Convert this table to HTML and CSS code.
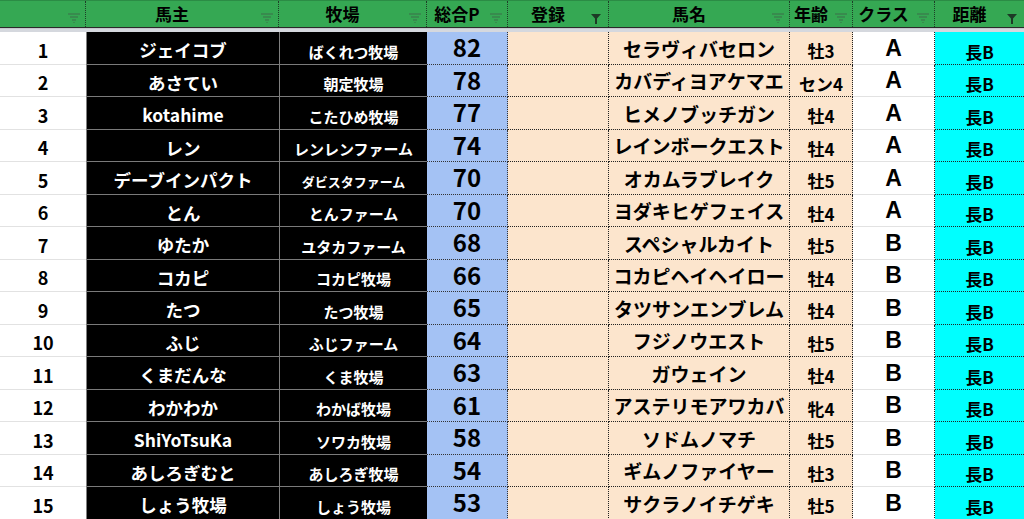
FILE: index.html
```html
<!DOCTYPE html>
<html lang="ja">
<head>
<meta charset="utf-8">
<link rel="stylesheet" href="styles.css">
</head>
<body>
<div class="sheet">
  <div class="head">
    <div class="hc"><span class="ht"></span><svg class="fi" viewBox="0 0 12 10"><path d="M0 1h12M2 4h8M4 7h4M5.5 9.5h1"/></svg></div>
    <div class="hc"><span class="ht">馬主</span><svg class="fi" viewBox="0 0 12 10"><path d="M0 1h12M2 4h8M4 7h4M5.5 9.5h1"/></svg></div>
    <div class="hc"><span class="ht">牧場</span><svg class="fi" viewBox="0 0 12 10"><path d="M0 1h12M2 4h8M4 7h4M5.5 9.5h1"/></svg></div>
    <div class="hc"><span class="ht">総合P</span><svg class="fi" viewBox="0 0 12 10"><path d="M0 1h12M2 4h8M4 7h4M5.5 9.5h1"/></svg></div>
    <div class="hc"><span class="ht">登録</span><svg class="ff" viewBox="0 0 10 10"><path d="M0 0h10L6 4.5V10H4V4.5z"/></svg></div>
    <div class="hc"><span class="ht">馬名</span><svg class="fi" viewBox="0 0 12 10"><path d="M0 1h12M2 4h8M4 7h4M5.5 9.5h1"/></svg></div>
    <div class="hc"><span class="ht">年齢</span><svg class="fi" viewBox="0 0 12 10"><path d="M0 1h12M2 4h8M4 7h4M5.5 9.5h1"/></svg></div>
    <div class="hc"><span class="ht">クラス</span><svg class="fi" viewBox="0 0 12 10"><path d="M0 1h12M2 4h8M4 7h4M5.5 9.5h1"/></svg></div>
    <div class="hc last"><span class="ht">距離</span><svg class="ff" viewBox="0 0 10 10"><path d="M0 0h10L6 4.5V10H4V4.5z"/></svg></div>
  </div>
  <div class="band"></div>
  <div class="body">
    <div class="c num">1</div><div class="c own">ジェイコブ</div><div class="c farm">ばくれつ牧場</div><div class="c pts">82</div><div class="c reg"></div><div class="c horse">セラヴィバセロン</div><div class="c age">牡3</div><div class="c cls">A</div><div class="c dist">長B</div>
    <div class="c num">2</div><div class="c own">あさてい</div><div class="c farm">朝定牧場</div><div class="c pts">78</div><div class="c reg"></div><div class="c horse">カバディヨアケマエ</div><div class="c age">セン4</div><div class="c cls">A</div><div class="c dist">長B</div>
    <div class="c num">3</div><div class="c own">kotahime</div><div class="c farm">こたひめ牧場</div><div class="c pts">77</div><div class="c reg"></div><div class="c horse">ヒメノブッチガン</div><div class="c age">牡4</div><div class="c cls">A</div><div class="c dist">長B</div>
    <div class="c num">4</div><div class="c own">レン</div><div class="c farm">レンレンファーム</div><div class="c pts">74</div><div class="c reg"></div><div class="c horse">レインボークエスト</div><div class="c age">牡4</div><div class="c cls">A</div><div class="c dist">長B</div>
    <div class="c num">5</div><div class="c own">デーブインパクト</div><div class="c farm sm">ダビスタファーム</div><div class="c pts">70</div><div class="c reg"></div><div class="c horse">オカムラブレイク</div><div class="c age">牡5</div><div class="c cls">A</div><div class="c dist">長B</div>
    <div class="c num">6</div><div class="c own">とん</div><div class="c farm">とんファーム</div><div class="c pts">70</div><div class="c reg"></div><div class="c horse">ヨダキヒゲフェイス</div><div class="c age">牡4</div><div class="c cls">A</div><div class="c dist">長B</div>
    <div class="c num">7</div><div class="c own">ゆたか</div><div class="c farm">ユタカファーム</div><div class="c pts">68</div><div class="c reg"></div><div class="c horse">スペシャルカイト</div><div class="c age">牡5</div><div class="c cls">B</div><div class="c dist">長B</div>
    <div class="c num">8</div><div class="c own">コカピ</div><div class="c farm">コカピ牧場</div><div class="c pts">66</div><div class="c reg"></div><div class="c horse">コカピヘイヘイロー</div><div class="c age">牡4</div><div class="c cls">B</div><div class="c dist">長B</div>
    <div class="c num">9</div><div class="c own">たつ</div><div class="c farm">たつ牧場</div><div class="c pts">65</div><div class="c reg"></div><div class="c horse">タツサンエンブレム</div><div class="c age">牡4</div><div class="c cls">B</div><div class="c dist">長B</div>
    <div class="c num">10</div><div class="c own">ふじ</div><div class="c farm">ふじファーム</div><div class="c pts">64</div><div class="c reg"></div><div class="c horse">フジノウエスト</div><div class="c age">牡5</div><div class="c cls">B</div><div class="c dist">長B</div>
    <div class="c num">11</div><div class="c own">くまだんな</div><div class="c farm">くま牧場</div><div class="c pts">63</div><div class="c reg"></div><div class="c horse">ガウェイン</div><div class="c age">牡4</div><div class="c cls">B</div><div class="c dist">長B</div>
    <div class="c num">12</div><div class="c own">わかわか</div><div class="c farm">わかば牧場</div><div class="c pts">61</div><div class="c reg"></div><div class="c horse">アステリモアワカバ</div><div class="c age">牝4</div><div class="c cls">B</div><div class="c dist">長B</div>
    <div class="c num">13</div><div class="c own">ShiYoTsuKa</div><div class="c farm">ソワカ牧場</div><div class="c pts">58</div><div class="c reg"></div><div class="c horse">ソドムノマチ</div><div class="c age">牡5</div><div class="c cls">B</div><div class="c dist">長B</div>
    <div class="c num">14</div><div class="c own">あしろぎむと</div><div class="c farm">あしろぎ牧場</div><div class="c pts">54</div><div class="c reg"></div><div class="c horse">ギムノファイヤー</div><div class="c age">牡3</div><div class="c cls">B</div><div class="c dist">長B</div>
    <div class="c num">15</div><div class="c own">しょう牧場</div><div class="c farm">しょう牧場</div><div class="c pts">53</div><div class="c reg"></div><div class="c horse">サクラノイチゲキ</div><div class="c age">牡5</div><div class="c cls">B</div><div class="c dist">長B</div>
  </div>
</div>
</body>
</html>
```

FILE: styles.css
```css
* { box-sizing: border-box; }
html, body { margin: 0; padding: 0; background: #fff; }
body {
  font-family: "Noto Sans CJK JP", "Noto Sans", sans-serif;
  font-weight: 700;
  color: #000;
  width: 1024px;
  height: 519px;
  overflow: hidden;
}
.sheet { width: 1024px; }

.head, .body {
  display: grid;
  grid-template-columns: 86px 193px 148px 81px 101px 181px 63px 82px 89px;
}
.head {
  height: 28px;
  background: #35a853;
  border-top: 1px solid #2b8c45;
  border-bottom: 1px solid #2a2a2a;
}
.hc {
  display: flex;
  align-items: center;
  padding: 0 5px 0 0;
  border-right: 1px dotted #1e3d27;
  font-size: 17px;
  line-height: 1.2;
}
.hc.last { border-right: none; }
.ht { flex: 1; text-align: center; padding-top: 1px; }
.fi {
  width: 12px;
  height: 10px;
  margin-top: 8px;
  margin-left: 3px;
  fill: none;
  stroke: #3d6e4a;
  stroke-width: 1.2;
}
.ff {
  width: 10px;
  height: 10px;
  margin-top: 9px;
  margin-left: 3px;
  margin-right: 2px;
  fill: #1d3a26;
}
.band {
  height: 4px;
  background: #d5d8de;
  border-top: 1px solid #c4c7cd;
}

.body { grid-auto-rows: 32.5px; }
.c {
  display: flex;
  align-items: center;
  justify-content: center;
  white-space: nowrap;
  line-height: 1.2;
}
.num {
  font-size: 18px;
  background: #fff;
  border-bottom: 1px solid #e2e2e2;
  padding-top: 6px;
}
.own {
  background: #000;
  color: #fff;
  font-size: 17.5px;
  border-left: 1px solid #808080;
  border-bottom: 1px solid #7a7a7a;
  padding-top: 4px;
}
.farm {
  background: #000;
  color: #fff;
  font-size: 15px;
  border-left: 1px solid #808080;
  border-bottom: 1px solid #7a7a7a;
  padding-top: 8px;
}
.farm.sm { font-size: 13px; }
.pts {
  background: #a4c2f4;
  font-size: 24px;
  border-bottom: 1px dotted #333;
  border-right: 1px dotted #333;
  padding-top: 0;
}
.reg {
  background: #fce5cd;
  border-bottom: 1px dotted #222;
  border-right: 1px dotted #222;
}
.horse {
  background: #fce5cd;
  font-size: 19px;
  border-bottom: 1px dotted #222;
  border-right: 1px dotted #222;
  padding-top: 3px;
}
.age {
  background: #fce5cd;
  font-size: 17px;
  border-bottom: 1px dotted #222;
  border-right: 1px dotted #222;
  padding-top: 7px;
}
.cls {
  background: #fff;
  font-family: "Liberation Sans", Arial, sans-serif;
  font-size: 23px;
  border-bottom: 1px solid #e2e2e2;
  border-right: 1px dotted #222;
  padding-top: 2px;
}
.dist {
  background: #00ffff;
  font-size: 17px;
  border-bottom: 1px dotted #222;
  padding-top: 8px;
}
```
